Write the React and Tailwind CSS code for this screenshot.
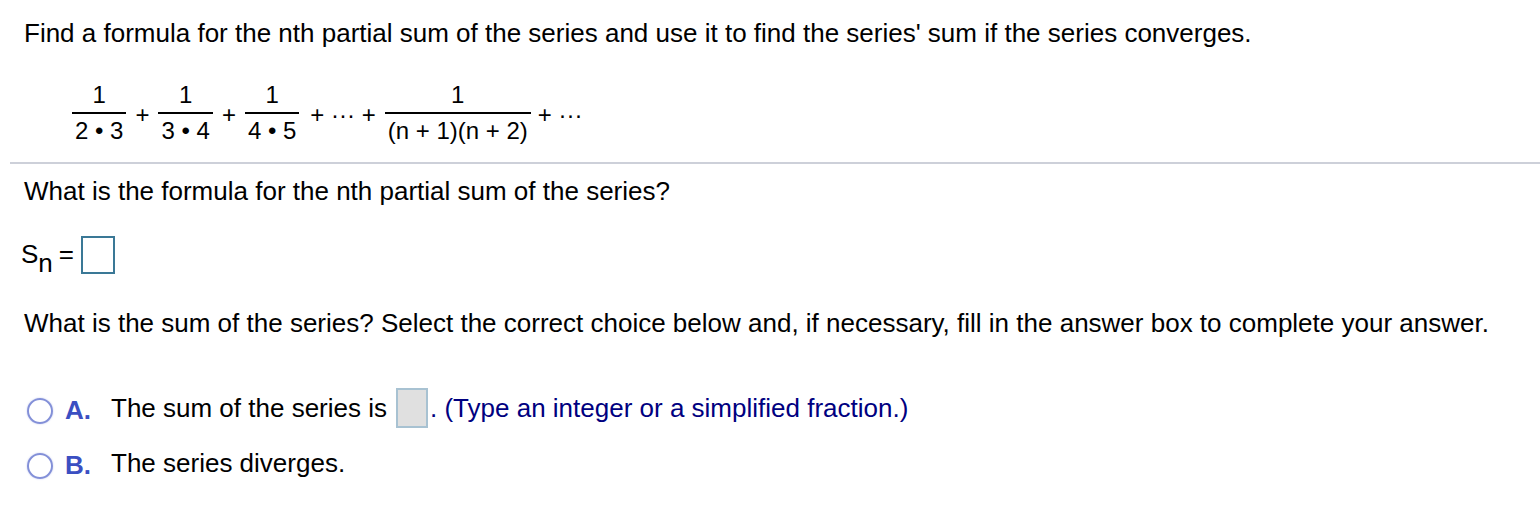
export default function App() {
  const frac = (den) => (
    <span className="inline-flex flex-col items-stretch text-center">
      <span className="leading-[28px]">1</span>
      <span className="mt-[3px] h-[2px] bg-black" />
      <span className="mt-[3px] px-[3px] leading-[28px] whitespace-pre">{den}</span>
    </span>
  );

  return (
    <div className="w-[1540px] h-[520px] bg-white text-black text-[26px]" style={{ fontFamily: '"Liberation Sans", Arial, sans-serif' }}>
      <div className="pl-[24px] pt-[18px] leading-[30px]">
        Find a formula for the nth partial sum of the series and use it to find the series' sum if the series converges.
      </div>

      <div className="pl-[72px] pt-[33px] flex items-center text-[24px] whitespace-pre">
        {frac('2 • 3')}
        <span className="px-[9px] translate-y-[2px] leading-[28px]">+</span>
        {frac('3 • 4')}
        <span className="px-[9px] translate-y-[2px] leading-[28px]">+</span>
        {frac('4 • 5')}
        <span className="pl-[11px] pr-[9px] translate-y-[2px] leading-[28px]">+ ··· +</span>
        {frac('(n + 1)(n + 2)')}
        <span className="pl-[7px] translate-y-[2px] leading-[28px]">+ ···</span>
      </div>

      <div className="ml-[10px] mt-[17px] h-[2px] bg-[#cdd0d9]" />

      <div className="pl-[24px] pt-[12px] leading-[30px]">
        What is the formula for the nth partial sum of the series?
      </div>

      <div className="pl-[21px] pt-[30px] flex items-start h-[68px] leading-[30px]">
        <span className="mt-[3px]">S</span>
        <span className="mt-[12px]">n</span>
        <span className="ml-[6px] mt-[3px]">=</span>
        <span className="ml-[7px] w-[34px] h-[38px] border-2 border-[#3a7896]" />
      </div>

      <div className="pl-[24px] pt-[34px] leading-[30px]">
        What is the sum of the series? Select the correct choice below and, if necessary, fill in the answer box to complete your answer.
      </div>

      <div className="pl-[27px] pt-[50px] flex flex-col gap-[15px] leading-[30px]">
        <div className="flex items-center h-[40px]">
          <span className="mt-[6px] w-[26px] h-[26px] rounded-full border-2 border-[#8390d8] shadow-[0_0_2px_#c5cbee]" />
          <span className="ml-[12px] mt-[4px] w-[46px] font-bold text-[#3b4fc2]">A.</span>
          <span>The sum of the series is</span>
          <span className="ml-[9px] w-[32px] h-[40px] bg-[#e0e0e0] border-2 border-[#a8c2d2]" />
          <span className="ml-[2px] text-[#000080]">. (Type an integer or a simplified fraction.)</span>
        </div>
        <div className="flex items-center h-[40px]">
          <span className="mt-[6px] w-[26px] h-[26px] rounded-full border-2 border-[#8390d8] shadow-[0_0_2px_#c5cbee]" />
          <span className="ml-[12px] mt-[4px] w-[46px] font-bold text-[#3b4fc2]">B.</span>
          <span>The series diverges.</span>
        </div>
      </div>
    </div>
  );
}
